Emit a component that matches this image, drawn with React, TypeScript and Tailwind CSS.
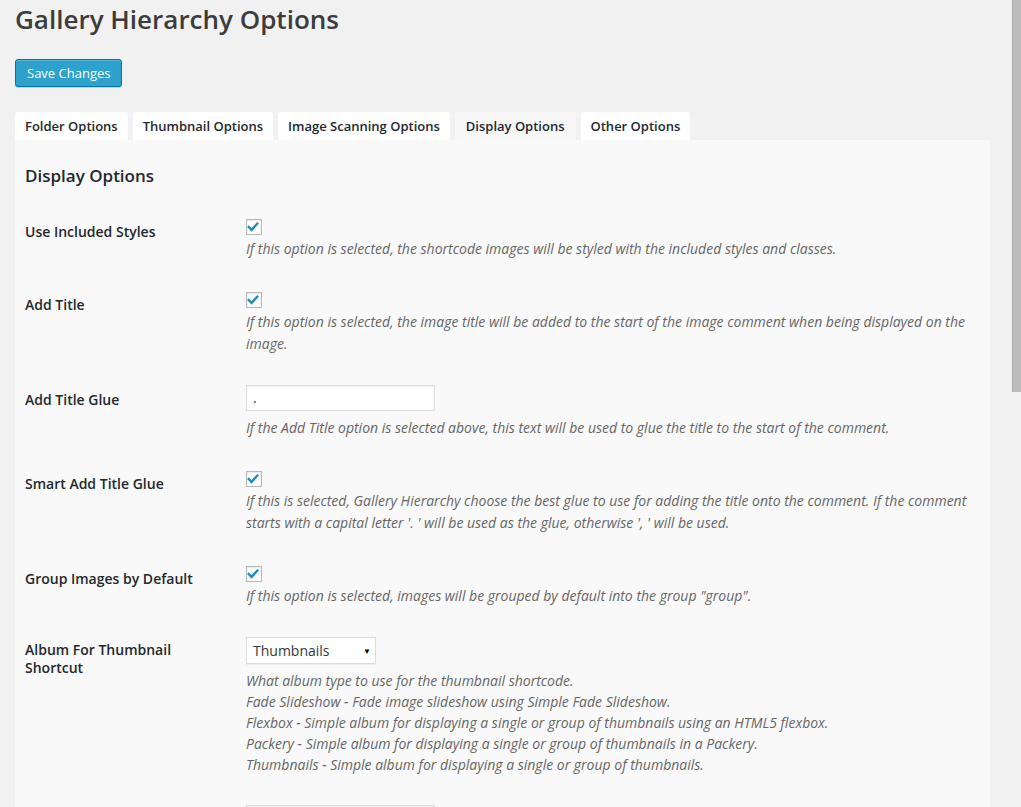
import React from 'react';

type Row = {
  label: string;
  field: 'checkbox' | 'text';
  value?: string;
  text: string;
};

const ROWS: Row[] = [
  {
    label: 'Use Included Styles',
    field: 'checkbox',
    text: 'If this option is selected, the shortcode images will be styled with the included styles and classes.',
  },
  {
    label: 'Add Title',
    field: 'checkbox',
    text: 'If this option is selected, the image title will be added to the start of the image comment when being displayed on the image.',
  },
  {
    label: 'Add Title Glue',
    field: 'text',
    value: '.',
    text: 'If the Add Title option is selected above, this text will be used to glue the title to the start of the comment.',
  },
  {
    label: 'Smart Add Title Glue',
    field: 'checkbox',
    text: "If this is selected, Gallery Hierarchy choose the best glue to use for adding the title onto the comment. If the comment starts with a capital letter '. ' will be used as the glue, otherwise ', ' will be used.",
  },
  {
    label: 'Group Images by Default',
    field: 'checkbox',
    text: 'If this option is selected, images will be grouped by default into the group "group".',
  },
];

const ALBUM_LINES = [
  'What album type to use for the thumbnail shortcode.',
  'Fade Slideshow - Fade image slideshow using Simple Fade Slideshow.',
  'Flexbox - Simple album for displaying a single or group of thumbnails using an HTML5 flexbox.',
  'Packery - Simple album for displaying a single or group of thumbnails in a Packery.',
  'Thumbnails - Simple album for displaying a single or group of thumbnails.',
];

const TABS = ['Folder Options', 'Thumbnail Options', 'Image Scanning Options', 'Display Options', 'Other Options'];

function Checkbox() {
  return (
    <div className="mt-[2px] flex h-[16px] w-[16px] items-center justify-center border border-[#b4b9be] bg-white shadow-[inset_0_1px_2px_rgba(0,0,0,0.1)]">
      <svg width="14" height="14" viewBox="0 0 14 14" fill="none">
        <path d="M1.8 7 L4.6 9.9 L10.3 3.6" stroke="#1e8cbe" strokeWidth="2.4" strokeLinecap="square" />
      </svg>
    </div>
  );
}

function TextInput({ value }: { value: string }) {
  return (
    <div className="h-[26px] w-[189px] border border-[#ddd] bg-white px-[6px] text-[14px] leading-[24px] text-[#32373c] shadow-[inset_0_1px_2px_rgba(0,0,0,0.07)]">
      {value}
    </div>
  );
}

export default function App() {
  return (
    <div className="flex h-screen w-full overflow-hidden bg-[#f1f1f1] font-['Open_Sans',sans-serif] text-[13px] text-[#444]">
      <div className="min-w-0 flex-1 pl-[15px] pr-[22px]">
        <h1 className="pt-[5px] text-[26px] font-semibold leading-[29px] text-[#3c3c3c]">Gallery Hierarchy Options</h1>

        <button className="mt-[25px] block h-[28px] rounded-[3px] border border-[#0074a2] bg-[#2ea2cc] px-[11px] text-[13px] leading-[26px] text-white shadow-[inset_0_1px_0_rgba(120,200,230,0.5),0_1px_0_rgba(0,0,0,0.15)]">
          Save Changes
        </button>

        <div className="mt-[25px] flex gap-[5px]">
          {TABS.map((tab) => (
            <div
              key={tab}
              className={
                tab === 'Display Options'
                  ? 'h-[28px] rounded-t-[3px] bg-[#f7f7f7] px-[11px] text-[13px] font-semibold leading-[28px] text-[#23282d]'
                  : 'h-[28px] rounded-t-[3px] bg-white px-[10px] text-[13px] font-semibold leading-[28px] text-[#23282d]'
              }
            >
              {tab}
            </div>
          ))}
        </div>

        <div className="bg-[#f9f9f9] px-[10px]">
          <h2 className="mb-[15px] pt-[25px] text-[17px] font-semibold leading-[22px] text-[#23282d]">Display Options</h2>

          {ROWS.map((row) => (
            <div key={row.label} className="flex pt-[15px] pb-[15px]">
              <div className="mr-[21px] w-[200px] shrink-0 pt-[6px] text-[14px] font-semibold leading-[18px] text-[#23282d]">
                {row.label}
              </div>
              <div className="min-w-0 flex-1">
                {row.field === 'checkbox' ? <Checkbox /> : <TextInput value={row.value ?? ''} />}
                <p className={row.field === 'text' ? 'mt-[6px] text-[14px] italic leading-[22px] text-[#666]' : 'mt-[3px] text-[14px] italic leading-[22px] text-[#666]'}>
                  {row.text}
                </p>
              </div>
            </div>
          ))}

          <div className="flex pt-[15px] pb-[15px]">
            <div className="mr-[21px] w-[200px] shrink-0 pt-[4px] text-[14px] font-semibold leading-[18px] text-[#23282d]">
              Album For Thumbnail Shortcut
            </div>
            <div className="min-w-0 flex-1">
              <div className="flex h-[27px] w-[130px] items-center justify-between border border-[#ddd] bg-white pl-[6px] pr-[4px] text-[14px] text-[#32373c] shadow-[0_1px_1px_rgba(0,0,0,0.04)]">
                <span>Thumbnails</span>
                <span className="text-[8px] text-black">▼</span>
              </div>
              <div className="mt-[6px] text-[14px] italic leading-[21px] text-[#666]">
                {ALBUM_LINES.map((line) => (
                  <p key={line}>{line}</p>
                ))}
              </div>
            </div>
          </div>

          {/* next row: only the top of its input shows in view */}
          <div className="flex pt-[15px] pb-[15px]">
            <div className="mr-[21px] w-[200px] shrink-0" />
            <div className="min-w-0 flex-1">
              <TextInput value="" />
            </div>
          </div>
        </div>
      </div>

      <div className="w-[9px] shrink-0">
        <div className="h-[392px] border-l border-[#a9a9a9] bg-[#bcbcbc]" />
      </div>
    </div>
  );
}
